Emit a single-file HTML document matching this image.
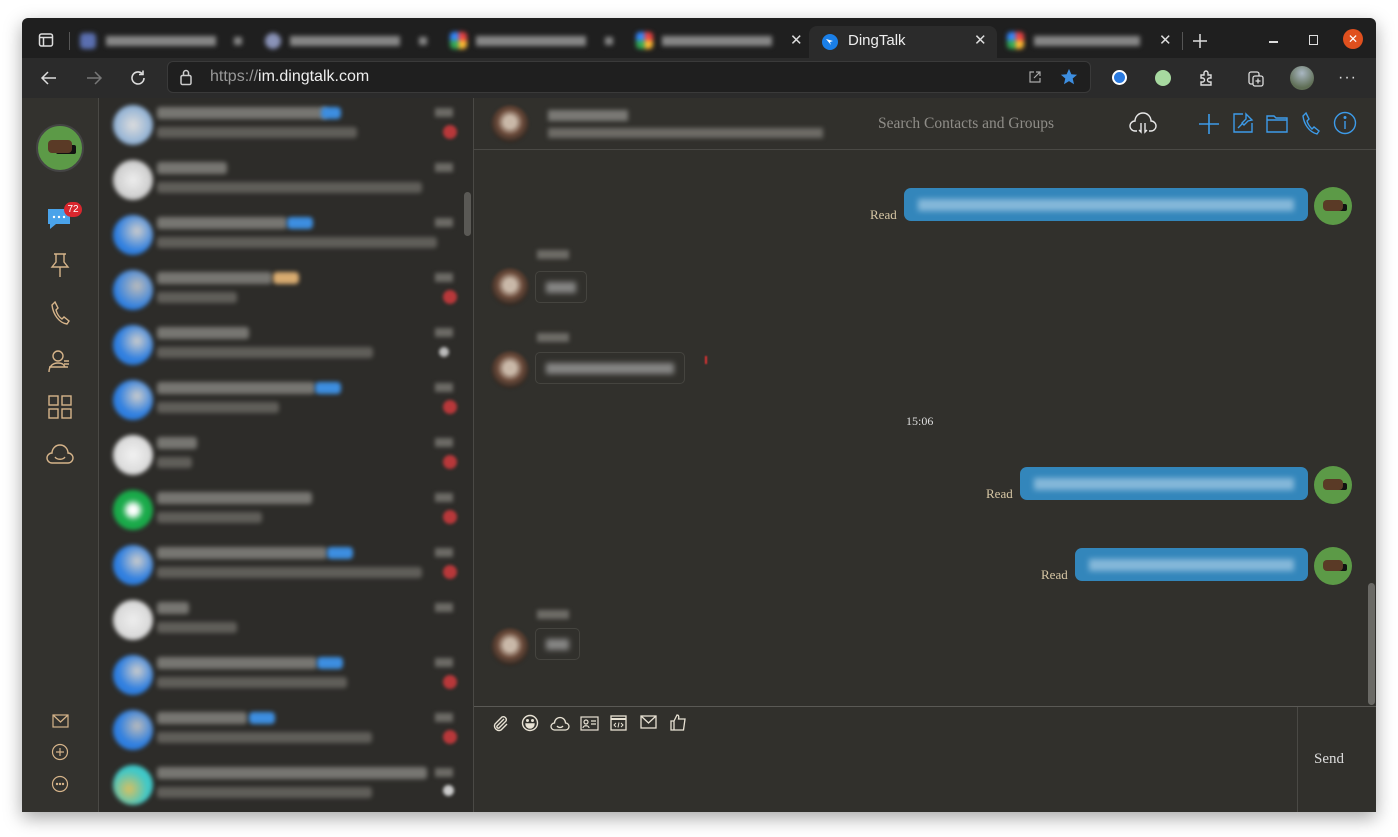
<!DOCTYPE html>
<html><head><meta charset="utf-8">
<style>
*{box-sizing:border-box;margin:0;padding:0}
body{width:1398px;height:837px;background:#fff;position:relative;overflow:hidden;font-family:"Liberation Sans",sans-serif}
.win{position:absolute;left:22px;top:18px;width:1354px;height:794px;background:#1f1f1f;box-shadow:0 6px 18px rgba(0,0,0,.35);border-radius:6px 6px 0 0;overflow:hidden}
.abs{position:absolute}
.blur{filter:blur(2.5px)}
.toolbar{position:absolute;left:0;top:40px;width:1354px;height:40px;background:#2b2b2b}
.rail{position:absolute;left:0;top:80px;width:77px;height:714px;background:#33322e;border-right:1px solid #4a4945}
.list{position:absolute;left:77px;top:80px;width:375px;height:714px;background:#2d2c29;border-right:1px solid #4a4945}
.chat{position:absolute;left:452px;top:80px;width:902px;height:714px;background:#31302c}
.row{position:absolute;left:0;width:360px;height:55px}
.av{position:absolute;left:14px;top:7px;width:40px;height:40px;border-radius:50%;filter:blur(2px)}
.t1{position:absolute;left:58px;top:9px;height:12px;background:#8a8984;border-radius:3px;filter:blur(2.5px);opacity:.8}
.t2{position:absolute;left:58px;top:29px;height:11px;background:#6d6b66;border-radius:3px;filter:blur(2.5px);opacity:.8}
.tm{position:absolute;left:336px;top:10px;width:18px;height:9px;background:#6d6b66;filter:blur(2px)}
.bd{position:absolute;left:344px;top:27px;width:14px;height:14px;border-radius:50%;background:#b8383a;filter:blur(1.5px)}
.ser{font-family:"Liberation Serif",serif}
.bub{position:absolute;height:33px;background:#3386bb;border-radius:7px}
.bub i{position:absolute;left:14px;right:14px;top:11px;height:12px;background:#a8cde6;filter:blur(3px);opacity:.7}
.read{position:absolute;color:#d6c6a4;font-size:13px;font-family:"Liberation Serif",serif}
.me{position:absolute;width:38px;height:38px;border-radius:50%;background:#5c9a47;overflow:hidden}
.me:after{content:"";position:absolute;left:9px;top:13px;width:20px;height:11px;background:#5a3a26;border-radius:4px;box-shadow:6px 2px 0 -2px #111}
.ot{position:absolute;width:38px;height:38px;border-radius:50%;background:radial-gradient(circle at 50% 45%,#c9b8a8 0 20%,#6a4a3a 45%,#2a2520 75%);filter:blur(1.2px)}
.ob{position:absolute;height:32px;border:1px solid #45443f;border-radius:5px}
.ob i{position:absolute;left:10px;right:10px;top:10px;height:11px;background:#aaa;filter:blur(3px);opacity:.7}
.nm{position:absolute;width:32px;height:9px;background:#6d6b66;filter:blur(2px)}
svg{position:absolute}
</style></head><body>
<div class="win">
 <svg style="left:16px;top:14px" width="16" height="16" viewBox="0 0 16 16" fill="none" stroke="#ddd" stroke-width="1.5"><rect x="1.5" y="2" width="13" height="12" rx="2"/><line x1="1.5" y1="5.5" x2="14.5" y2="5.5"/><line x1="5.5" y1="5.5" x2="5.5" y2="14"/></svg>
 <div class="abs" style="left:47px;top:14px;width:1px;height:18px;background:#555"></div>
 <div class="abs blur" style="left:58px;top:15px;width:16px;height:16px;background:#5a6fb0;border-radius:4px"></div>
 <div class="abs blur" style="left:84px;top:18px;width:110px;height:10px;background:#888"></div>
 <div class="abs blur" style="left:212px;top:19px;width:8px;height:8px;background:#888"></div>
 <div class="abs blur" style="left:243px;top:15px;width:16px;height:16px;background:#8a93b8;border-radius:50%"></div>
 <div class="abs blur" style="left:268px;top:18px;width:110px;height:10px;background:#888"></div>
 <div class="abs blur" style="left:397px;top:19px;width:8px;height:8px;background:#888"></div>
 <div class="abs blur" style="left:428px;top:14px;width:17px;height:17px;background:conic-gradient(#e44 0 25%,#fb3 0 50%,#3a5 0 75%,#38f 0);border-radius:4px"></div>
 <div class="abs blur" style="left:454px;top:18px;width:110px;height:10px;background:#888"></div>
 <div class="abs blur" style="left:583px;top:19px;width:8px;height:8px;background:#888"></div>
 <div class="abs blur" style="left:614px;top:14px;width:17px;height:17px;background:conic-gradient(#e44 0 25%,#fb3 0 50%,#3a5 0 75%,#38f 0);border-radius:4px"></div>
 <div class="abs blur" style="left:640px;top:18px;width:110px;height:10px;background:#888"></div>
 <div class="abs" style="left:768px;top:13px;color:#ddd;font-size:15px">✕</div>
 <div class="abs" style="left:787px;top:8px;width:188px;height:33px;background:#2b2b2b;border-radius:8px 8px 0 0"></div>
 <div class="abs" style="left:800px;top:16px;width:16px;height:16px;border-radius:50%;background:#1a7fe8"></div>
 <svg style="left:803px;top:19px" width="10" height="10" viewBox="0 0 10 10"><path d="M1 2 L8 4 L5 5 L6 8 Z" fill="#fff"/></svg>
 <div class="abs" style="left:826px;top:14px;color:#eee;font-size:15px">DingTalk</div>
 <div class="abs" style="left:952px;top:13px;color:#ddd;font-size:15px">✕</div>
 <div class="abs blur" style="left:985px;top:14px;width:17px;height:17px;background:conic-gradient(#e44 0 25%,#fb3 0 50%,#3a5 0 75%,#38f 0);border-radius:4px"></div>
 <div class="abs blur" style="left:1012px;top:18px;width:106px;height:10px;background:#888"></div>
 <div class="abs" style="left:1137px;top:13px;color:#ddd;font-size:15px">✕</div>
 <div class="abs" style="left:1160px;top:14px;width:1px;height:18px;background:#555"></div>
 <svg style="left:1170px;top:15px" width="16" height="16" viewBox="0 0 16 16" stroke="#ddd" stroke-width="1.5"><line x1="8" y1="1" x2="8" y2="15"/><line x1="1" y1="8" x2="15" y2="8"/></svg>
 <div class="abs" style="left:1247px;top:23px;width:9px;height:1.5px;background:#ddd"></div>
 <div class="abs" style="left:1287px;top:17px;width:9px;height:10px;border:1.5px solid #ddd"></div>
 <div class="abs" style="left:1321px;top:11px;width:20px;height:20px;border-radius:50%;background:#e0501e;color:#fff;font-size:12px;text-align:center;line-height:20px">✕</div>
 <div class="toolbar">
  <svg style="left:18px;top:11px" width="18" height="18" viewBox="0 0 18 18" fill="none" stroke="#ddd" stroke-width="1.5"><path d="M16 9H2M8 3L2 9l6 6"/></svg>
  <svg style="left:63px;top:11px" width="18" height="18" viewBox="0 0 18 18" fill="none" stroke="#777" stroke-width="1.5"><path d="M2 9h14M10 3l6 6-6 6"/></svg>
  <svg style="left:107px;top:11px" width="18" height="18" viewBox="0 0 18 18" fill="none" stroke="#ddd" stroke-width="1.6"><path d="M15 9a6 6 0 1 1-2-4.5M14 1.5v4h-4"/></svg>
  <div class="abs" style="left:145px;top:3px;width:924px;height:32px;background:#1f1f1f;border:1px solid #3a3a3a;border-radius:6px"></div>
  <svg style="left:157px;top:10px" width="14" height="18" viewBox="0 0 14 18" fill="none" stroke="#ccc" stroke-width="1.5"><rect x="2" y="7.5" width="10" height="9" rx="1.5"/><path d="M4.5 7.5V5a2.5 2.5 0 0 1 5 0v2.5"/></svg>
  <div class="abs" style="left:188px;top:10px;font-size:16px;color:#999">https://<span style="color:#eee">im.dingtalk.com</span></div>
  <svg style="left:1006px;top:12px" width="14" height="14" viewBox="0 0 14 14" fill="none" stroke="#aaa" stroke-width="1.2"><path d="M6 2H2v10h10V8M8 2h4v4M12 2L6 8"/></svg>
  <svg style="left:1038px;top:10px" width="18" height="18" viewBox="0 0 20 20"><path d="M10 1l2.6 6 6.4.5-4.9 4.2 1.5 6.3L10 14.6 4.4 18l1.5-6.3L1 7.5l6.4-.5z" fill="#3d8ee0"/></svg>
  <div class="abs" style="left:1090px;top:12px;width:15px;height:15px;border-radius:50%;background:#2a7ae0;border:2px solid #fff"></div>
  <div class="abs" style="left:1133px;top:12px;width:16px;height:16px;border-radius:50%;background:#a7d9a0"></div>
  <svg style="left:1176px;top:11px" width="18" height="18" viewBox="0 0 18 18" fill="none" stroke="#ddd" stroke-width="1.4"><path d="M3 6h3V4a2 2 0 0 1 4 0v2h3v3h-1.5a2 2 0 0 0 0 4H13v3H3v-3h1.5a2 2 0 0 0 0-4H3z"/></svg>
  <svg style="left:1225px;top:11px" width="18" height="18" viewBox="0 0 18 18" fill="none" stroke="#ddd" stroke-width="1.3"><rect x="2" y="3" width="10" height="12" rx="2"/><rect x="6" y="7" width="10" height="10" rx="2" fill="#2b2b2b"/><path d="M11 9.5v5M8.5 12h5"/></svg>
  <div class="abs" style="left:1268px;top:8px;width:24px;height:24px;border-radius:50%;background:radial-gradient(circle at 50% 30%,#a9b7c2,#5f6e55 70%)"></div>
  <div class="abs" style="left:1316px;top:11px;color:#ddd;font-size:16px;letter-spacing:1px">···</div>
 </div>
 <div class="rail">
  <div class="abs" style="left:14px;top:26px;width:48px;height:48px;border-radius:50%;background:#5c9a47;border:2px solid #444"></div>
  <div class="abs" style="left:26px;top:42px;width:24px;height:13px;background:#5a3a26;border-radius:4px;box-shadow:6px 3px 0 -2px #111"></div>
  <svg style="left:24px;top:108px" width="28" height="26" viewBox="0 0 28 26"><path d="M2 3h22v15H10l-6 5v-5H2z" fill="#4aa3ea"/><circle cx="8" cy="11" r="1.2" fill="#fff"/><circle cx="13" cy="11" r="1.2" fill="#fff"/><circle cx="18" cy="11" r="1.2" fill="#fff"/></svg>
  <div class="abs" style="left:42px;top:104px;width:18px;height:15px;border-radius:8px;background:#d9272e;color:#fff;font-size:10px;text-align:center;line-height:15px">72</div>
  <svg style="left:26px;top:154px" width="24" height="26" viewBox="0 0 24 26" fill="none" stroke="#d6b48a" stroke-width="1.4"><path d="M6 2h12M8 2v8l-4 5h16l-4-5V2M12 15v10"/></svg>
  <svg style="left:28px;top:202px" width="20" height="26" viewBox="0 0 20 26" fill="none" stroke="#d6b48a" stroke-width="1.4"><path d="M5 2l3 6-2 2c1 4 3 7 6 9l2-2 5 4-2 3C9 23 3 14 2 5z"/></svg>
  <svg style="left:25px;top:250px" width="26" height="26" viewBox="0 0 26 26" fill="none" stroke="#d6b48a" stroke-width="1.4"><circle cx="11" cy="8" r="5"/><path d="M2 24c0-6 4-9 9-9s6 2 7 4H2M17 13h5M17 16h5M17 19h4"/></svg>
  <svg style="left:26px;top:297px" width="24" height="24" viewBox="0 0 24 24" fill="none" stroke="#d6b48a" stroke-width="1.4"><rect x="1" y="1" width="9" height="9"/><rect x="14" y="1" width="9" height="9"/><rect x="1" y="14" width="9" height="9"/><rect x="14" y="14" width="9" height="9"/></svg>
  <svg style="left:24px;top:345px" width="28" height="24" viewBox="0 0 28 24" fill="none" stroke="#d6b48a" stroke-width="1.4"><path d="M6 20h16a5 5 0 0 0 0-10 8 8 0 0 0-16 0 5 5 0 0 0 0 10zM9 14c2 3 8 3 10 0"/></svg>
  <svg style="left:30px;top:616px" width="17" height="14" viewBox="0 0 17 14" fill="none" stroke="#d6b48a" stroke-width="1.2"><rect x="1" y="1" width="15" height="12"/><path d="M1 1l7.5 7L16 1"/></svg>
  <svg style="left:29px;top:645px" width="18" height="18" viewBox="0 0 18 18" fill="none" stroke="#d6b48a" stroke-width="1.2"><circle cx="9" cy="9" r="7.5"/><path d="M9 5v8M5 9h8"/></svg>
  <svg style="left:29px;top:677px" width="18" height="18" viewBox="0 0 18 18" fill="none" stroke="#d6b48a" stroke-width="1.2"><circle cx="9" cy="9" r="7.5"/><circle cx="6" cy="9" r=".6" fill="#d6b48a"/><circle cx="9" cy="9" r=".6" fill="#d6b48a"/><circle cx="12" cy="9" r=".6" fill="#d6b48a"/></svg>
 </div>
 <div class="list">
  <div class="row" style="top:0px"><div class="av" style="background:radial-gradient(circle,#ddd,#6a9bd0)"></div><div class="t1" style="width:170px"></div><div class="abs" style="left:222px;top:9px;width:20px;height:12px;background:#3d8ee0;border-radius:4px;filter:blur(2px)"></div><div class="t2" style="width:200px"></div><div class="tm"></div><div class="bd"></div></div>
  <div class="row" style="top:55px"><div class="av" style="background:radial-gradient(circle,#eee,#bbb)"></div><div class="t1" style="width:70px"></div><div class="t2" style="width:265px"></div><div class="tm"></div></div>
  <div class="row" style="top:110px"><div class="av" style="background:radial-gradient(circle at 60% 40%,#ccc,#2f7fe0 60%)"></div><div class="t1" style="width:130px"></div><div class="abs" style="left:188px;top:9px;width:26px;height:12px;background:#3d8ee0;border-radius:4px;filter:blur(2px)"></div><div class="t2" style="width:280px"></div><div class="tm"></div></div>
  <div class="row" style="top:165px"><div class="av" style="background:radial-gradient(circle at 60% 40%,#bbb,#2f7fe0 65%)"></div><div class="t1" style="width:115px"></div><div class="abs" style="left:174px;top:9px;width:26px;height:12px;background:#d8ab70;border-radius:4px;filter:blur(2px)"></div><div class="t2" style="width:80px"></div><div class="tm"></div><div class="bd"></div></div>
  <div class="row" style="top:220px"><div class="av" style="background:radial-gradient(circle at 60% 40%,#ccc,#2f7fe0 55%)"></div><div class="t1" style="width:92px"></div><div class="t2" style="width:216px"></div><div class="tm"></div><div class="bd" style="background:#bbb;width:10px;height:10px;left:340px;top:29px"></div></div>
  <div class="row" style="top:275px"><div class="av" style="background:radial-gradient(circle at 60% 40%,#ccc,#2f7fe0 55%)"></div><div class="t1" style="width:158px"></div><div class="abs" style="left:216px;top:9px;width:26px;height:12px;background:#3d8ee0;border-radius:4px;filter:blur(2px)"></div><div class="t2" style="width:122px"></div><div class="tm"></div><div class="bd"></div></div>
  <div class="row" style="top:330px"><div class="av" style="background:radial-gradient(circle,#f2f2f2,#ccc)"></div><div class="t1" style="width:40px"></div><div class="t2" style="width:35px"></div><div class="tm"></div><div class="bd"></div></div>
  <div class="row" style="top:385px"><div class="av" style="background:radial-gradient(circle,#fff 15%,#1aaa4a 40%)"></div><div class="t1" style="width:155px"></div><div class="t2" style="width:105px"></div><div class="tm"></div><div class="bd"></div></div>
  <div class="row" style="top:440px"><div class="av" style="background:radial-gradient(circle at 60% 40%,#ccc,#2f7fe0 55%)"></div><div class="t1" style="width:170px"></div><div class="abs" style="left:228px;top:9px;width:26px;height:12px;background:#3d8ee0;border-radius:4px;filter:blur(2px)"></div><div class="t2" style="width:265px"></div><div class="tm"></div><div class="bd"></div></div>
  <div class="row" style="top:495px"><div class="av" style="background:radial-gradient(circle,#eee,#ccc)"></div><div class="t1" style="width:32px"></div><div class="t2" style="width:80px"></div><div class="tm"></div></div>
  <div class="row" style="top:550px"><div class="av" style="background:radial-gradient(circle at 60% 40%,#ccc,#2f7fe0 55%)"></div><div class="t1" style="width:160px"></div><div class="abs" style="left:218px;top:9px;width:26px;height:12px;background:#3d8ee0;border-radius:4px;filter:blur(2px)"></div><div class="t2" style="width:190px"></div><div class="tm"></div><div class="bd"></div></div>
  <div class="row" style="top:605px"><div class="av" style="background:radial-gradient(circle at 60% 40%,#bbb,#2f7fe0 55%)"></div><div class="t1" style="width:90px"></div><div class="abs" style="left:150px;top:9px;width:26px;height:12px;background:#3d8ee0;border-radius:4px;filter:blur(2px)"></div><div class="t2" style="width:215px"></div><div class="tm"></div><div class="bd"></div></div>
  <div class="row" style="top:660px"><div class="av" style="background:radial-gradient(circle at 40% 60%,#d8c060,#40c8c8 55%)"></div><div class="t1" style="width:270px"></div><div class="t2" style="width:215px"></div><div class="tm"></div><div class="bd" style="background:#ccc;width:11px;height:11px"></div></div>
  <div class="abs" style="left:365px;top:94px;width:7px;height:44px;border-radius:4px;background:#5a5955"></div>
 </div>
 <div class="chat">
  <div class="abs" style="left:0;top:51px;width:902px;height:1px;background:#4a4945"></div>
  <div class="ot" style="left:17px;top:7px"></div>
  <div class="abs blur" style="left:74px;top:12px;width:80px;height:11px;background:#7a7975"></div>
  <div class="abs blur" style="left:74px;top:30px;width:275px;height:10px;background:#6d6b66"></div>
  <div class="abs ser" style="left:404px;top:17px;color:#8f8d88;font-size:15.5px">Search Contacts and Groups</div>
  <svg style="left:655px;top:13px" width="28" height="24" viewBox="0 0 28 24" fill="none" stroke="#e8e8e8" stroke-width="1.4"><path d="M8 20H6a5 5 0 0 1 0-10 8 8 0 0 1 16 0 5 5 0 0 1 0 10h-2M12 12v9l-2-2M16 12v9l2-2"/></svg>
  <svg style="left:724px;top:15px" width="22" height="22" viewBox="0 0 22 22" stroke="#3d9be9" stroke-width="1.6"><path d="M11 1v20M1 11h20"/></svg>
  <svg style="left:758px;top:14px" width="22" height="22" viewBox="0 0 22 22" fill="none" stroke="#3d9be9" stroke-width="1.4"><path d="M11 2H2v18h18v-9M14 2l6 6-4 1-4 4-2-2 4-4zM6 16l5-5"/></svg>
  <svg style="left:792px;top:14px" width="22" height="22" viewBox="0 0 22 22" fill="none" stroke="#3d9be9" stroke-width="1.4"><path d="M1 4h7l2 2h11v14H1zM1 8h20"/></svg>
  <svg style="left:828px;top:13px" width="18" height="24" viewBox="0 0 18 24" fill="none" stroke="#3d9be9" stroke-width="1.4"><path d="M4 2l3 6-2 2c1 4 3 6 5 8l2-2 5 4-2 3C7 21 2 13 1 5z"/></svg>
  <svg style="left:859px;top:13px" width="24" height="24" viewBox="0 0 24 24" fill="none" stroke="#3d9be9" stroke-width="1.4"><circle cx="12" cy="12" r="10.5"/><path d="M12 10v8"/><circle cx="12" cy="6.5" r=".8" fill="#3d9be9"/></svg>

  <div class="read" style="left:396px;top:109px">Read</div>
  <div class="bub" style="left:430px;top:90px;width:404px"><i></i></div>
  <div class="me" style="left:840px;top:89px"></div>

  <div class="nm" style="left:63px;top:152px"></div>
  <div class="ot" style="left:17px;top:170px"></div>
  <div class="ob" style="left:61px;top:173px;width:52px"><i></i></div>

  <div class="nm" style="left:63px;top:235px"></div>
  <div class="ot" style="left:17px;top:253px"></div>
  <div class="ob" style="left:61px;top:254px;width:150px"><i></i></div>
  <div class="abs" style="left:231px;top:258px;width:2px;height:8px;background:#d33;filter:blur(.8px)"></div>

  <div class="abs" style="left:432px;top:316px;color:#ddd;font-size:12px;font-family:'Liberation Serif',serif">15:06</div>

  <div class="read" style="left:512px;top:388px">Read</div>
  <div class="bub" style="left:546px;top:369px;width:288px"><i></i></div>
  <div class="me" style="left:840px;top:368px"></div>

  <div class="read" style="left:567px;top:469px">Read</div>
  <div class="bub" style="left:601px;top:450px;width:233px"><i></i></div>
  <div class="me" style="left:840px;top:449px"></div>

  <div class="nm" style="left:63px;top:512px"></div>
  <div class="ot" style="left:17px;top:530px"></div>
  <div class="ob" style="left:61px;top:530px;width:45px"><i></i></div>

  <div class="abs" style="left:894px;top:485px;width:7px;height:122px;border-radius:4px;background:#6a6965"></div>

  <div class="abs" style="left:0;top:608px;width:902px;height:1px;background:#5a5955"></div>
  <div class="abs" style="left:823px;top:609px;width:1px;height:105px;background:#4a4945"></div>
  <div class="abs ser" style="left:840px;top:653px;color:#ddd;font-size:15px">Send</div>

  <svg style="left:17px;top:616px" width="18" height="18" viewBox="0 0 18 18" fill="none" stroke="#e8e2d4" stroke-width="1.4"><path d="M13 5l-7 7a1.5 1.5 0 0 0 2 2l7-7a3 3 0 0 0-4-4L4 10a4.5 4.5 0 0 0 6 6l6-6"/></svg>
  <svg style="left:47px;top:616px" width="18" height="18" viewBox="0 0 18 18" fill="none" stroke="#e8e2d4" stroke-width="1.4"><circle cx="9" cy="9" r="7.5"/><path d="M5 10h8a4 4 0 0 1-8 0z" fill="#e8e2d4"/><circle cx="6.5" cy="6.5" r=".8" fill="#e8e2d4"/><circle cx="11.5" cy="6.5" r=".8" fill="#e8e2d4"/></svg>
  <svg style="left:76px;top:618px" width="20" height="16" viewBox="0 0 20 16" fill="none" stroke="#e8e2d4" stroke-width="1.3"><path d="M4.5 14h11a3.5 3.5 0 0 0 0-7 5.5 5.5 0 0 0-11 0 3.5 3.5 0 0 0 0 7zM7 10c1.5 2 4.5 2 6 0"/></svg>
  <svg style="left:106px;top:618px" width="19" height="15" viewBox="0 0 19 15" fill="none" stroke="#e8e2d4" stroke-width="1.2"><rect x="1" y="1" width="17" height="13"/><circle cx="6" cy="6" r="2"/><path d="M3 12c0-3 6-3 6 0M11 5h5M11 8h5"/></svg>
  <svg style="left:136px;top:617px" width="17" height="16" viewBox="0 0 17 16" fill="none" stroke="#e8e2d4" stroke-width="1.3"><rect x="1" y="1" width="15" height="14"/><path d="M1 4h15" stroke-width="2"/><path d="M6 8l-2 2 2 2M11 8l2 2-2 2M9 7.5l-1 5" stroke-width="1"/></svg>
  <svg style="left:166px;top:617px" width="17" height="14" viewBox="0 0 17 14" fill="none" stroke="#e8e2d4" stroke-width="1.3"><rect x="1" y="1" width="15" height="12"/><path d="M1 1l7.5 7L16 1"/></svg>
  <svg style="left:196px;top:615px" width="17" height="18" viewBox="0 0 17 18" fill="none" stroke="#e8e2d4" stroke-width="1.3"><path d="M1 8h3v9H1zM4 8l3-6c2 0 2 2 1.5 4H15l-1.5 11H4"/></svg>
 </div>
</div>
</body></html>
